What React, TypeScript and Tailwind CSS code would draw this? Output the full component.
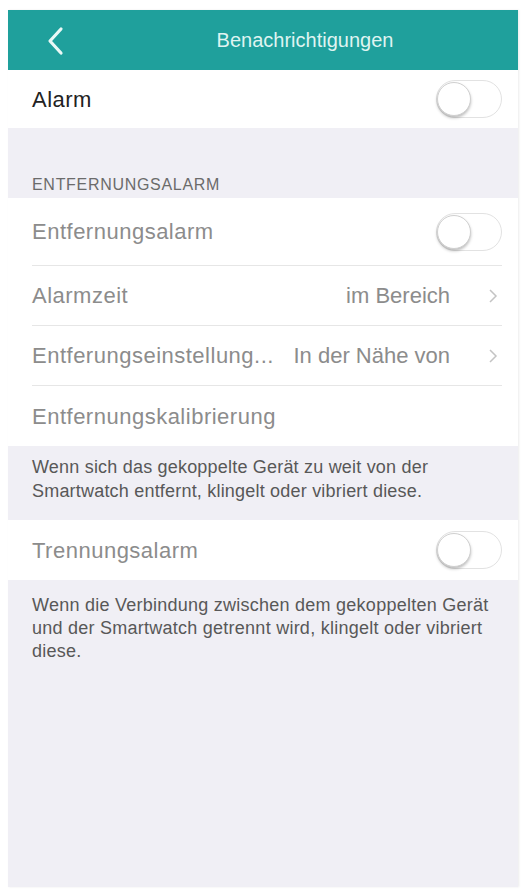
import React from "react";

const Toggle = () => (
  <div className="relative w-[66px] h-[38px] rounded-full border border-[#e2e2e2] bg-white">
    <div className="absolute left-0 top-[1px] w-[34px] h-[34px] rounded-full bg-white border border-[#d0d0d0] shadow-[0_2px_3px_rgba(0,0,0,0.25)]" />
  </div>
);

const Chevron = () => (
  <svg width="10" height="16" viewBox="0 0 10 16" className="ml-[38px] mr-[4px]">
    <path d="M2 2l6 6-6 6" fill="none" stroke="#c4c4c4" strokeWidth="1.5" />
  </svg>
);

const Row = ({
  label,
  value,
  toggle,
  chevron,
  divider,
  h = "h-[60px]",
}: {
  label: string;
  value?: string;
  toggle?: boolean;
  chevron?: boolean;
  divider?: boolean;
  h?: string;
}) => (
  <div className={`flex items-center pl-6 pr-4 ${h} bg-white`}>
    <div className={`flex flex-1 items-center h-full ${divider ? "border-b border-[#e6e6e6]" : ""}`}>
      <span className="flex-1 text-[22px] tracking-[0.5px] text-[#8c8c8c] whitespace-nowrap">{label}</span>
      {value && <span className="text-[22px] text-[#8c8c8c] whitespace-nowrap">{value}</span>}
      {chevron && <Chevron />}
      {toggle && <Toggle />}
    </div>
  </div>
);

export default function App() {
  return (
    <div
      className="w-[523px] h-[890px] bg-white pt-[10px] pl-[8px] pr-[5px] pb-[3px]"
      style={{ fontFamily: "'Liberation Sans', Arial, sans-serif" }}
    >
      <div className="flex flex-col h-full bg-[#f0eff5] shadow-[1px_0_2px_rgba(0,0,0,0.08)]">
        <div className="relative flex items-center justify-center h-[60px] bg-[#1fa09c] pl-[84px]">
          <svg width="20" height="30" viewBox="0 0 20 30" className="absolute left-[38px] top-[16px]">
            <path d="M15 3L4 15l11 12" fill="none" stroke="#eaf8f6" strokeWidth="3.2" strokeLinecap="round" strokeLinejoin="round" />
          </svg>
          <span className="text-[20px] text-[#dff4f1]">Benachrichtigungen</span>
        </div>

        <div className="flex items-center h-[58px] bg-white pl-6 pr-4">
          <span className="flex-1 text-[22px] tracking-[0.5px] text-[#222]">Alarm</span>
          <Toggle />
        </div>

        <div className="h-[70px] flex items-end pl-6 pb-[1px]">
          <span className="text-[16px] tracking-[0.7px] text-[#6b6b6b]">ENTFERNUNGSALARM</span>
        </div>

        <Row label="Entfernungsalarm" toggle divider h="h-[68px]" />
        <Row label="Alarmzeit" value="im Bereich" chevron divider />
        <Row label="Entferungseinstellung..." value="In der Nähe von" chevron divider />
        <Row label="Entfernungskalibrierung" />

        <div className="h-[74px] pl-6 pr-4 pt-[9px] text-[18px] tracking-[0.2px] leading-[24px] text-[#585858] whitespace-nowrap">
          Wenn sich das gekoppelte Gerät zu weit von der
          <br />
          Smartwatch entfernt, klingelt oder vibriert diese.
        </div>

        <Row label="Trennungsalarm" toggle />

        <div className="pl-6 pr-4 pt-[14px] text-[18px] tracking-[0.25px] leading-[23px] text-[#585858] whitespace-nowrap">
          Wenn die Verbindung zwischen dem gekoppelten Gerät
          <br />
          und der Smartwatch getrennt wird, klingelt oder vibriert
          <br />
          diese.
        </div>
      </div>
    </div>
  );
}
